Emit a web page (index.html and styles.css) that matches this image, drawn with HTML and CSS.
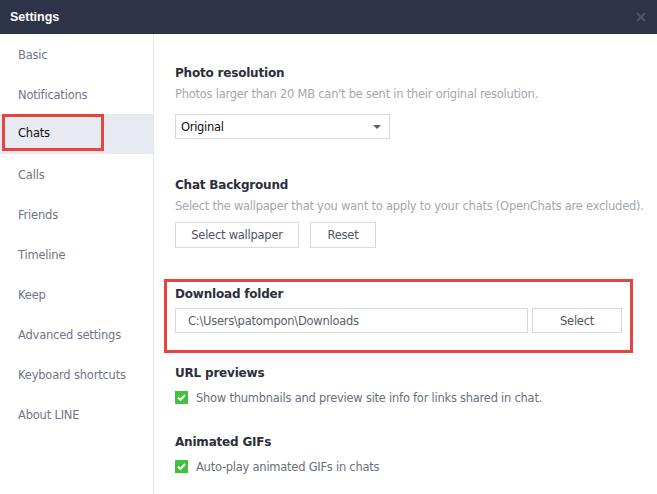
FILE: index.html
```html
<!DOCTYPE html>
<html lang="en">
<head>
  <meta charset="UTF-8" />
  <title>Settings</title>
  <link rel="stylesheet" href="styles.css">
</head>
<body>
  <header class="titlebar">
    <h1>Settings</h1>
    <svg class="close" width="10" height="10" viewBox="0 0 10 10"><path d="M1 1 L9 9 M9 1 L1 9" stroke="#4f5669" stroke-width="1.8"/></svg>
  </header>
  <div class="window">
    <nav class="sidebar">
      <a href="#">Basic</a>
      <a href="#">Notifications</a>
      <a href="#" class="active"><span class="mark">Chats</span></a>
      <a href="#">Calls</a>
      <a href="#">Friends</a>
      <a href="#">Timeline</a>
      <a href="#">Keep</a>
      <a href="#">Advanced settings</a>
      <a href="#">Keyboard shortcuts</a>
      <a href="#">About LINE</a>
    </nav>
    <main class="content">
      <section class="group photo">
        <h3>Photo resolution</h3>
        <p class="desc">Photos larger than 20 MB can't be sent in their original resolution.</p>
        <div class="select">Original<span class="caret"></span></div>
      </section>
      <section class="group background">
        <h3>Chat Background</h3>
        <p class="desc">Select the wallpaper that you want to apply to your chats (OpenChats are excluded).</p>
        <div class="buttons">
          <button class="btn wide">Select wallpaper</button>
          <button class="btn">Reset</button>
        </div>
      </section>
      <section class="group folder">
        <h3>Download folder</h3>
        <div class="path-row">
          <div class="path">C:\Users\patompon\Downloads</div>
          <button class="btn pick">Select</button>
        </div>
      </section>
      <section class="group previews">
        <h3>URL previews</h3>
        <label class="check"><span class="box"><svg width="9" height="7" viewBox="0 0 9 7"><path d="M1 3.5 L3.5 6 L8 1" fill="none" stroke="#fff" stroke-width="2"/></svg></span>Show thumbnails and preview site info for links shared in chat.</label>
      </section>
      <section class="group gifs">
        <h3>Animated GIFs</h3>
        <label class="check"><span class="box"><svg width="9" height="7" viewBox="0 0 9 7"><path d="M1 3.5 L3.5 6 L8 1" fill="none" stroke="#fff" stroke-width="2"/></svg></span>Auto-play animated GIFs in chats</label>
      </section>
    </main>
  </div>
</body>
</html>
```

FILE: styles.css
```css
body {
  margin: 0;
  font-family: "DejaVu Sans", sans-serif;
  font-size: 12px;
  background: #fff;
  width: 657px;
  height: 494px;
  overflow: hidden;
}
.titlebar {
  height: 34px;
  background: #2d3447;
  display: flex;
  align-items: center;
  justify-content: space-between;
  padding: 0 11px 0 10px;
}
.titlebar h1 {
  margin: 0;
  color: #fff;
  font-family: "Liberation Sans", sans-serif;
  font-size: 12.5px;
  font-weight: bold;
}
.window {
  display: flex;
  height: 460px;
}
.sidebar {
  width: 153px;
  flex-shrink: 0;
  border-right: 1px solid #e6e8ec;
  display: flex;
  flex-direction: column;
}
.sidebar a {
  height: 40px;
  display: flex;
  align-items: center;
  padding: 1px 0 0 18px;
  box-sizing: border-box;
  color: #707588;
  text-decoration: none;
  font-size: 11.5px;
  letter-spacing: -0.2px;
}
.sidebar a.active {
  background: #e8eaf1;
  color: #111;
  padding: 0 0 0 2px;
  align-items: flex-start;
}
.mark {
  display: flex;
  align-items: center;
  box-sizing: border-box;
  width: 102px;
  height: 37px;
  padding: 1px 0 0 13px;
  border: 3px solid #e8443f;
}
.content {
  flex: 1;
  min-width: 0;
  padding: 32px 0 0 21px;
}
.group h3 {
  margin: 0 0 6px;
  line-height: 15px;
  font-size: 12px;
  font-weight: bold;
  color: #2b2f3a;
  letter-spacing: -0.2px;
}
.desc {
  margin: 0;
  line-height: 15px;
  color: #a4a7ae;
  font-size: 11.5px;
  letter-spacing: -0.25px;
}
.photo .desc { margin-bottom: 12px; }
.photo { margin-bottom: 39px; }
.background .desc { margin-bottom: 8px; }
.select {
  width: 215px;
  height: 25px;
  box-sizing: border-box;
  border: 1px solid #d8d9dd;
  display: flex;
  align-items: center;
  padding: 0 5px;
  font-size: 11.5px;
  color: #111;
  position: relative;
  letter-spacing: -0.3px;
}
.caret {
  position: absolute;
  right: 8px;
  top: 10px;
  border-left: 4px solid transparent;
  border-right: 4px solid transparent;
  border-top: 4px solid #5a5f6e;
}
.buttons {
  display: flex;
  gap: 11px;
}
.btn {
  height: 26px;
  border: 1px solid #d8d9dd;
  background: #fff;
  font-family: inherit;
  font-size: 11.5px;
  color: #50545f;
  padding: 0;
  letter-spacing: -0.25px;
}
.btn.wide { width: 124px; }
.buttons .btn:last-child { width: 66px; }
.folder {
  margin: 31px 24px 13px -11px;
  border: 3px solid #e8443f;
  padding: 5px 8px 17px 8px;
}
.folder h3 { margin-bottom: 6px; }
.path-row {
  display: flex;
  gap: 4px;
}
.path {
  flex: 1;
  height: 25px;
  box-sizing: border-box;
  border: 1px solid #d8d9dd;
  display: flex;
  align-items: center;
  padding-left: 12px;
  color: #5a5f6c;
  font-size: 11.5px;
  letter-spacing: -0.25px;
}
.btn.pick {
  width: 90px;
  height: 25px;
}
.previews { margin-bottom: 30px; }
.previews h3, .gifs h3 { margin-bottom: 9px; }
.check {
  display: flex;
  align-items: center;
  height: 15px;
  color: #6a6f80;
  font-size: 11.5px;
  letter-spacing: -0.25px;
}
.box {
  width: 13px;
  height: 13px;
  background: #3ec33b;
  display: flex;
  align-items: center;
  justify-content: center;
  margin-right: 8px;
}
```
